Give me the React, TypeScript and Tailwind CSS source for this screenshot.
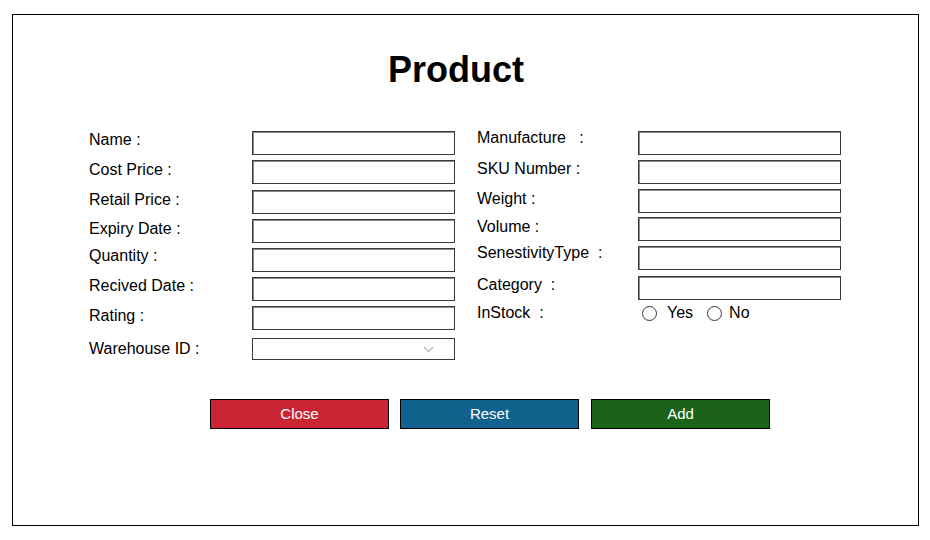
import React from 'react';

type Row = { label: string; rowCls: string; labelCls: string };

const leftRows: Row[] = [
    { label: 'Name :', rowCls: '', labelCls: '' },
    { label: 'Cost Price :', rowCls: 'mt-[5px]', labelCls: 'mt-[1px]' },
    { label: 'Retail Price :', rowCls: 'mt-[6px]', labelCls: 'mt-[1px]' },
    { label: 'Expiry Date :', rowCls: 'mt-[5px]', labelCls: 'mt-[1px]' },
    { label: 'Quantity :', rowCls: 'mt-[5px]', labelCls: '-mt-[1px]' },
    { label: 'Recived Date :', rowCls: 'mt-[5px]', labelCls: '' },
    { label: 'Rating :', rowCls: 'mt-[5px]', labelCls: 'mt-[1px]' },
];

const rightRows: Row[] = [
    { label: 'Manufacture   :', rowCls: '', labelCls: '-mt-[2px]' },
    { label: 'SKU Number :', rowCls: 'mt-[5px]', labelCls: '' },
    { label: 'Weight :', rowCls: 'mt-[5px]', labelCls: 'mt-[1px]' },
    { label: 'Volume :', rowCls: 'mt-[4px]', labelCls: 'mt-[1px]' },
    { label: 'SenestivityType  :', rowCls: 'mt-[5px]', labelCls: '-mt-[2px]' },
    { label: 'Category  :', rowCls: 'mt-[6px]', labelCls: '' },
];

const inputCls = 'w-[203px] h-[24px] border border-[#3a3a3a] shadow-[inset_1px_1px_0_#8a8a8a] bg-white';

const App: React.FC = () => {
    return (
        <div className="w-[930px] h-[540px] bg-white pt-[14px] pl-[12px] font-['Liberation_Sans',Arial,sans-serif] text-black">
            <div className="w-[907px] h-[512px] border border-black">
                {/* Title */}
                <h1 className="pt-[34px] pr-[19px] text-center text-[36px] font-bold leading-[41px]">Product</h1>

                {/* Form columns */}
                <div className="flex mt-[41px] pl-[76px] gap-[22px] text-[16px]">
                    <div className="flex flex-col w-[366px]">
                        {leftRows.map((r) => (
                            <div key={r.label} className={`flex items-start ${r.rowCls}`}>
                                <span className={`w-[163px] leading-[18px] whitespace-pre ${r.labelCls}`}>{r.label}</span>
                                <div className={inputCls} />
                            </div>
                        ))}
                        <div className="flex items-start mt-[8px]">
                            <span className="w-[163px] leading-[18px] mt-[2px]">Warehouse ID :</span>
                            <div className="w-[203px] h-[22px] border border-[#3a3a3a] bg-white flex items-center justify-end pr-[20px]">
                                <svg width="11" height="7" viewBox="0 0 11 7" fill="none">
                                    <path d="M1 1l4.5 4.5L10 1" stroke="#b5b5b5" strokeWidth="1.3" />
                                </svg>
                            </div>
                        </div>
                    </div>

                    <div className="flex flex-col">
                        {rightRows.map((r) => (
                            <div key={r.label} className={`flex items-start ${r.rowCls}`}>
                                <span className={`w-[161px] leading-[18px] whitespace-pre ${r.labelCls}`}>{r.label}</span>
                                <div className={inputCls} />
                            </div>
                        ))}
                        <div className="flex items-center mt-[4px] h-[18px]">
                            <span className="w-[161px] leading-[18px] whitespace-pre">InStock  :</span>
                            <div className="flex items-center ml-[4px]">
                                <span className="w-[15px] h-[15px] rounded-full border border-[#333] bg-white" />
                                <span className="ml-[10px] leading-[18px]">Yes</span>
                                <span className="ml-[14px] w-[15px] h-[15px] rounded-full border border-[#333] bg-white" />
                                <span className="ml-[7px] leading-[18px]">No</span>
                            </div>
                        </div>
                    </div>
                </div>

                {/* Buttons */}
                <div className="flex pl-[197px] mt-[39px] text-[15px] text-white">
                    <button className="w-[179px] h-[30px] bg-[#cb2533] border border-black">Close</button>
                    <button className="ml-[11px] w-[179px] h-[30px] bg-[#10618b] border border-black">Reset</button>
                    <button className="ml-[12px] w-[179px] h-[30px] bg-[#1b621b] border border-black">Add</button>
                </div>
            </div>
        </div>
    );
};

export default App;
